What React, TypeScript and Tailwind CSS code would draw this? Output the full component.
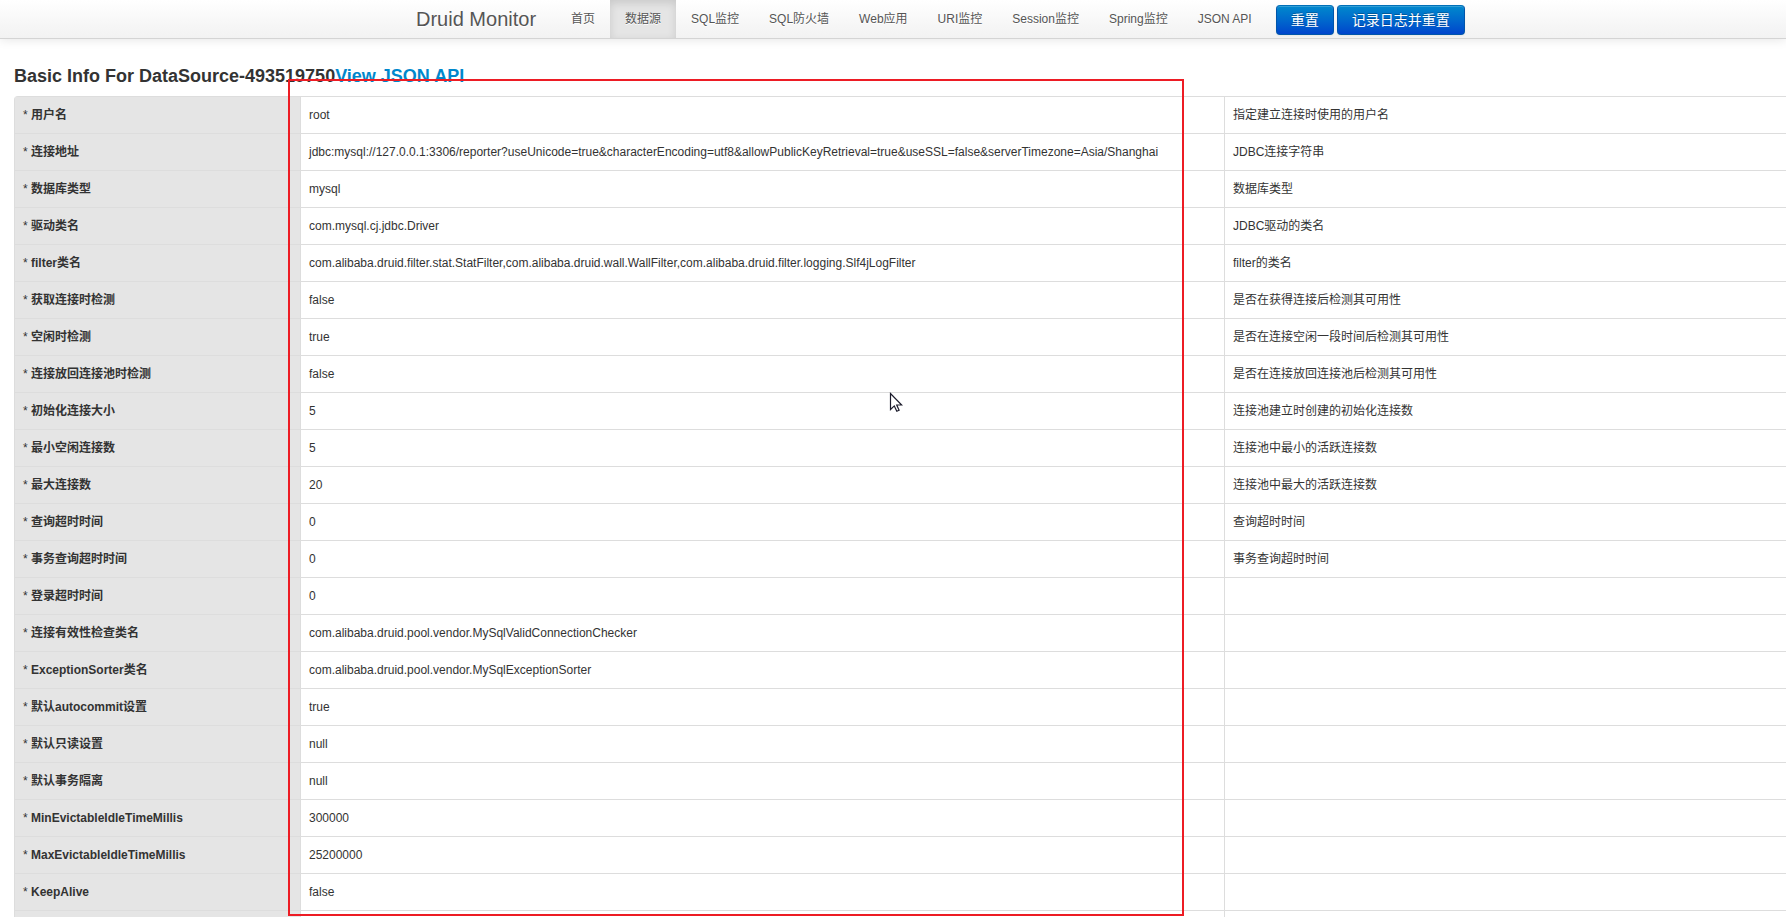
import clsx from "clsx";

const navItems = [
    { label: "首页", href: "#index" },
    { label: "数据源", href: "#datasource", active: true },
    { label: "SQL监控", href: "#sql" },
    { label: "SQL防火墙", href: "#wall" },
    { label: "Web应用", href: "#webapp" },
    { label: "URI监控", href: "#weburi" },
    { label: "Session监控", href: "#websession" },
    { label: "Spring监控", href: "#spring" },
    { label: "JSON API", href: "#api" },
];

// name, value, description
const rows = [
    ["用户名", "root", "指定建立连接时使用的用户名"],
    ["连接地址", "jdbc:mysql://127.0.0.1:3306/reporter?useUnicode=true&characterEncoding=utf8&allowPublicKeyRetrieval=true&useSSL=false&serverTimezone=Asia/Shanghai", "JDBC连接字符串"],
    ["数据库类型", "mysql", "数据库类型"],
    ["驱动类名", "com.mysql.cj.jdbc.Driver", "JDBC驱动的类名"],
    ["filter类名", "com.alibaba.druid.filter.stat.StatFilter,com.alibaba.druid.wall.WallFilter,com.alibaba.druid.filter.logging.Slf4jLogFilter", "filter的类名"],
    ["获取连接时检测", "false", "是否在获得连接后检测其可用性"],
    ["空闲时检测", "true", "是否在连接空闲一段时间后检测其可用性"],
    ["连接放回连接池时检测", "false", "是否在连接放回连接池后检测其可用性"],
    ["初始化连接大小", "5", "连接池建立时创建的初始化连接数"],
    ["最小空闲连接数", "5", "连接池中最小的活跃连接数"],
    ["最大连接数", "20", "连接池中最大的活跃连接数"],
    ["查询超时时间", "0", "查询超时时间"],
    ["事务查询超时时间", "0", "事务查询超时时间"],
    ["登录超时时间", "0", ""],
    ["连接有效性检查类名", "com.alibaba.druid.pool.vendor.MySqlValidConnectionChecker", ""],
    ["ExceptionSorter类名", "com.alibaba.druid.pool.vendor.MySqlExceptionSorter", ""],
    ["默认autocommit设置", "true", ""],
    ["默认只读设置", "null", ""],
    ["默认事务隔离", "null", ""],
    ["MinEvictableIdleTimeMillis", "300000", ""],
    ["MaxEvictableIdleTimeMillis", "25200000", ""],
    ["KeepAlive", "false", ""],
    ["", "", ""],
];

const btnClass =
    "h-[30px] rounded border border-[#0055aa] border-t-[#0070b8] bg-linear-to-b from-[#0088cc] to-[#0044cc] px-[14px] text-sm leading-5 text-white shadow-[inset_0_1px_0_rgba(255,255,255,0.2),0_1px_2px_rgba(0,0,0,0.05)] text-shadow-[0_-1px_0_rgba(0,0,0,0.25)]";

function Navbar() {
    return (
        <header className="flex h-[39px] items-stretch border-b border-[#d4d4d4] bg-linear-to-b from-white to-[#f2f2f2] pl-[416px] whitespace-nowrap text-[#555] shadow-[0_1px_10px_rgba(0,0,0,0.1)]">
            <a href="#index" className="pt-[9px] pr-5 text-xl leading-5 text-[#555] text-shadow-[0_1px_0_#fff]">
                Druid Monitor
            </a>
            <nav className="flex items-stretch">
                {navItems.map((item) => (
                    <a
                        key={item.label}
                        href={item.href}
                        className={clsx(
                            "px-[15px] pt-[9px] leading-5 text-shadow-[0_1px_0_#fff]",
                            item.active && "bg-[#e5e5e5] shadow-[inset_0_3px_8px_rgba(0,0,0,0.125)]"
                        )}
                    >
                        {item.label}
                    </a>
                ))}
            </nav>
            <div className="flex gap-[3px] pt-[5px] pl-[9px]">
                <button type="button" className={btnClass}>重置</button>
                <button type="button" className={btnClass}>记录日志并重置</button>
            </div>
        </header>
    );
}

function InfoTable() {
    return (
        <table className="w-full table-fixed border-separate border-spacing-0 rounded-tl border-t border-l border-[#ddd]">
            <colgroup>
                <col className="w-[285px]" />
                <col className="w-[924px]" />
                <col />
            </colgroup>
            <tbody>
                {rows.map(([name, value, desc], i) => (
                    <tr key={i} className="h-[37px]">
                        <th scope="row" className="border-b border-[#ddd] bg-[#e5e5e5] px-2 text-left font-normal">
                            {name && <>* <b>{name}</b></>}
                        </th>
                        <td className="border-b border-l border-[#ddd] px-2">{value}</td>
                        <td className="border-b border-l border-[#ddd] px-2">{desc}</td>
                    </tr>
                ))}
            </tbody>
        </table>
    );
}

export default function App() {
    return (
        <div className="relative h-screen overflow-hidden bg-white font-['Liberation_Sans','Noto_Sans_CJK_SC',sans-serif] text-xs leading-5 text-[#333]">
            <Navbar />
            <main className="pt-[27px] pl-[14px]">
                <h1 className="mb-[10px] text-lg leading-5 font-bold">
                    Basic Info For DataSource-493519750<a href="#json" className="text-[#0088cc]">View JSON API</a>
                </h1>
                <InfoTable />
            </main>

            {/* highlight around the value column */}
            <div className="pointer-events-none absolute top-[79px] left-[288px] h-[837px] w-[896px] border-2 border-[#ed1c24]" />
            <svg className="pointer-events-none absolute top-[392px] left-[889px]" width="14" height="21" viewBox="0 0 14 21">
                <path d="M1.5 1.5v16l3.8-3.6 2.5 5.3 2.3-1-2.4-5.2h5z" fill="#fff" stroke="#1c1c2c" strokeWidth="1.2" />
            </svg>
        </div>
    );
}
